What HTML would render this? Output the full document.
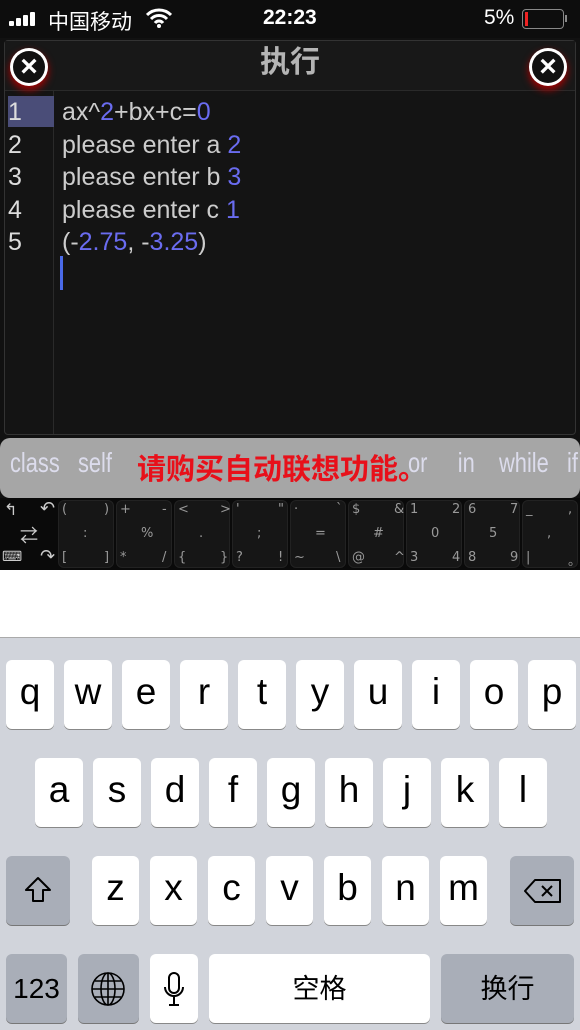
<!DOCTYPE html>
<html><head><meta charset="utf-8"><style>
*{margin:0;padding:0;box-sizing:border-box}
body{width:580px;height:1030px;overflow:hidden;background:#111;font-family:"Liberation Sans","Noto Sans CJK SC",sans-serif;position:relative}
.a{position:absolute}
.sb{color:#fff;font-size:21px;top:6px}
.ed{left:4px;top:40px;width:572px;height:395px;background:#141414;border:1px solid #333;border-radius:4px}
.ttl{left:0;top:0;width:570px;height:50px;border-bottom:1px solid #2a2a2a;background:#181818;color:#b4b4b4;font-size:30px;text-align:center;line-height:44px;font-weight:bold}
.x{width:38px;height:38px;border-radius:50%;background:#fff;top:48px;box-shadow:0 4px 8px #a00}
.x::after{content:"";position:absolute;left:3px;top:3px;width:32px;height:32px;border-radius:50%;background:#111}
.x span{position:absolute;left:0;top:0;width:38px;height:38px;color:#fff;font-size:30px;font-weight:bold;text-align:center;line-height:37px;z-index:2}
.ln{left:8px;color:#ddd;font-size:25px}
.tx{left:62px;color:#ccc;font-size:25px}
.b{color:#6a6cf0}
.k{color:#999;font-size:13px;font-family:"DejaVu Sans",sans-serif}
.col{top:500px;width:56px;height:68px;border-radius:6px;background:#161616;border:1px solid #222}
.kk{background:#fff;border-radius:6px;box-shadow:0 1px 0 #888;text-align:center;color:#000;font-size:37px;height:69px;line-height:64px}
.g{background:#a9aeb8;border-radius:6px;box-shadow:0 1px 0 #777;height:69px}
</style></head><body>
<div class="a" style="left:0;top:0;width:580px;height:38px;background:#0d0d0d"></div>
<div class="a" style="left:9px;top:12px;width:48px;height:14px">
<div class="a" style="left:0;top:9px;width:5px;height:5px;background:#fff;border-radius:1px"></div>
<div class="a" style="left:7px;top:6px;width:5px;height:8px;background:#fff;border-radius:1px"></div>
<div class="a" style="left:14px;top:3px;width:5px;height:11px;background:#fff;border-radius:1px"></div>
<div class="a" style="left:21px;top:0;width:5px;height:14px;background:#fff;border-radius:1px"></div></div>
<div class="a sb" style="left:48px">中国移动</div>
<svg class="a" style="left:146px;top:8px" width="26" height="20" viewBox="0 0 26 20"><path d="M1 7a17 17 0 0 1 24 0M5 11a11 11 0 0 1 16 0M9 15a5 5 0 0 1 8 0" stroke="#fff" stroke-width="3" fill="none"/><circle cx="13" cy="18" r="2" fill="#fff"/></svg>
<div class="a sb" style="left:263px;font-weight:bold">22:23</div>
<div class="a sb" style="left:484px">5%</div>
<div class="a" style="left:522px;top:9px;width:42px;height:20px;border:1px solid #888;border-radius:4px"><div class="a" style="left:2px;top:2px;width:3px;height:14px;background:#e22"></div></div>
<div class="a" style="left:565px;top:15px;width:2px;height:7px;background:#888"></div>

<div class="a ed">
<div class="a ttl">执行</div>
<div class="a" style="left:48px;top:50px;width:1px;height:343px;background:#2a2a2a"></div>
<div class="a" style="left:3px;top:55px;width:46px;height:31px;background:#4a4d78"></div>
</div>
<div class="a x" style="left:10px"><span>×</span></div>
<div class="a x" style="left:529px"><span>×</span></div>
<div class="a ln" style="top:98px">1</div><div class="a ln" style="top:131px">2</div><div class="a ln" style="top:163px">3</div><div class="a ln" style="top:196px">4</div><div class="a ln" style="top:228px">5</div>
<div class="a tx" style="top:98px">ax^<span class="b">2</span>+bx+c=<span class="b">0</span></div>
<div class="a tx" style="top:131px">please enter a <span class="b">2</span></div>
<div class="a tx" style="top:163px">please enter b <span class="b">3</span></div>
<div class="a tx" style="top:196px">please enter c <span class="b">1</span></div>
<div class="a tx" style="top:228px">(-<span class="b">2.75</span>, -<span class="b">3.25</span>)</div>
<div class="a" style="left:60px;top:256px;width:3px;height:34px;background:#4a6ae8"></div>

<div class="a" style="left:0;top:438px;width:580px;height:60px;background:#a6a6a6;border-radius:10px"></div>
<div class="a" style="left:10px;top:447px;color:#dcdcec;font-size:28px;transform:scaleX(.78);transform-origin:left;white-space:nowrap">class&nbsp;&nbsp;&nbsp;self</div>
<div class="a" style="left:408px;top:447px;color:#dcdcec;font-size:28px;transform:scaleX(.78);transform-origin:left;white-space:nowrap">or&nbsp;&nbsp;&nbsp;&nbsp;&nbsp;in&nbsp;&nbsp;&nbsp;&nbsp;while&nbsp;&nbsp;&nbsp;if</div>
<div class="a" style="left:137px;top:446px;color:#e8101a;font-size:29px;font-weight:bold">请购买自动联想功能。</div>

<div class="a" style="left:0;top:498px;width:580px;height:72px;background:#0a0a0a"></div>
<div class="a" style="left:4px;top:500px;color:#ccc;font-size:16px">↰</div>
<div class="a" style="left:40px;top:498px;color:#ccc;font-size:18px">↶</div>
<div class="a" style="left:20px;top:522px;color:#ccc;font-size:18px">⇄</div>
<div class="a" style="left:2px;top:548px;color:#ccc;font-size:14px">⌨</div>
<div class="a" style="left:40px;top:546px;color:#ccc;font-size:18px">↷</div>
<div id="cols"></div>
<script>
var d=[["(",")",":","[","]"],["+","-","%","*","/"],["<",">",".","{","}"],["'","\"",";","?","!"],["·","`","=","~","\\"],["$","&","#","@","^"],["1","2","0","3","4"],["6","7","5","8","9"],["_",",",",","|","。"]];
var h="";for(var i=0;i<9;i++){var x=58+i*58;h+='<div class="a col" style="left:'+x+'px"></div>';var s=d[i];
h+='<div class="a k" style="left:'+(x+4)+'px;top:502px">'+s[0]+'</div><div class="a k" style="left:'+(x+46)+'px;top:502px">'+s[1]+'</div><div class="a k" style="left:'+(x+25)+'px;top:526px">'+s[2]+'</div><div class="a k" style="left:'+(x+4)+'px;top:550px">'+s[3]+'</div><div class="a k" style="left:'+(x+46)+'px;top:550px">'+s[4]+'</div>';}
document.getElementById("cols").outerHTML=h;
</script>
<div class="a" style="left:0;top:570px;width:580px;height:67px;background:#fff"></div>
<div class="a" style="left:0;top:637px;width:580px;height:393px;background:#d1d4db;border-top:1px solid #aaa"></div>
<div id="kb"></div>
<script>
var h="",r1="qwertyuiop",r2="asdfghjkl",r3="zxcvbnm";
for(var i=0;i<10;i++)h+='<div class="a kk" style="left:'+(6+i*58)+'px;top:660px;width:48px">'+r1[i]+'</div>';
for(var i=0;i<9;i++)h+='<div class="a kk" style="left:'+(35+i*58)+'px;top:758px;width:48px">'+r2[i]+'</div>';
for(var i=0;i<7;i++)h+='<div class="a kk" style="left:'+(92+i*58)+'px;top:856px;width:47px">'+r3[i]+'</div>';
document.getElementById("kb").outerHTML=h;
</script>
<div class="a g" style="left:6px;top:856px;width:64px"><svg class="a" style="left:18px;top:20px" width="28" height="28" viewBox="0 0 28 28"><path d="M14 2L2 14h7v11h10V14h7z" fill="none" stroke="#000" stroke-width="2" stroke-linejoin="round"/></svg></div>
<div class="a g" style="left:510px;top:856px;width:64px"><svg class="a" style="left:13px;top:22px" width="40" height="26" viewBox="0 0 40 26"><path d="M12 2h25v22H12L2 13z" fill="none" stroke="#000" stroke-width="2" stroke-linejoin="round"/><path d="M19 8l10 10M29 8L19 18" stroke="#000" stroke-width="2"/></svg></div>
<div class="a g" style="left:6px;top:954px;width:61px;font-size:28px;text-align:center;line-height:70px">123</div>
<div class="a g" style="left:78px;top:954px;width:61px"><svg class="a" style="left:12px;top:17px" width="36" height="36" viewBox="0 0 36 36" fill="none" stroke="#000" stroke-width="1.6"><circle cx="18" cy="18" r="16"/><ellipse cx="18" cy="18" rx="7" ry="16"/><path d="M18 2v32M2 18h32M5 10h26M5 26h26"/></svg></div>
<div class="a kk" style="left:150px;top:954px;width:48px"><svg class="a" style="left:13px;top:17px" width="22" height="36" viewBox="0 0 22 36" fill="none" stroke="#000" stroke-width="2"><rect x="6" y="2" width="10" height="20" rx="5"/><path d="M2 16a9 9 0 0 0 18 0M11 25v8M6 34h10"/></svg></div>
<div class="a kk" style="left:209px;top:954px;width:221px;font-size:27px;line-height:70px">空格</div>
<div class="a g" style="left:441px;top:954px;width:133px;font-size:27px;text-align:center;line-height:70px">换行</div>
</body></html>
